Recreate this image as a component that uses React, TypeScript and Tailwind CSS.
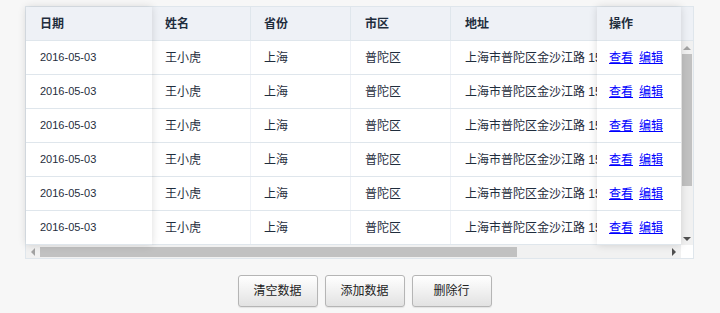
import React from 'react';

type Row = {
  date: string;
  name: string;
  province: string;
  city: string;
  address: string;
};

const rows: Row[] = Array.from({ length: 6 }, () => ({
  date: '2016-05-03',
  name: '王小虎',
  province: '上海',
  city: '普陀区',
  address: '上海市普陀区金沙江路 1518 弄',
}));

const cjk = "font-['Liberation_Sans','Noto_Sans_CJK_SC',sans-serif]";

function App() {
  return (
    <div className={`min-h-screen bg-[#f7f7f7] pt-[6px] text-[12px] text-[#1f2d3d] ${cjk}`}>
      {/* table */}
      <div className="ml-[25px] w-[669px] border border-[#dfe6ec] bg-white">
        <div className="flex h-[238px]">
          {/* fixed left column */}
          <div className="relative z-10 flex w-[126px] shrink-0 flex-col bg-white shadow-[0_0_8px_rgba(0,0,0,0.14)]">
            <div className="flex h-[34px] items-center border-b border-[#dfe6ec] bg-[#eef1f6] pl-[14px] font-bold">
              日期
            </div>
            {rows.map((r, i) => (
              <div
                key={i}
                className="flex h-[34px] items-center border-b border-[#dfe6ec] pl-[14px] text-[11px] font-['Liberation_Sans',sans-serif]"
              >
                {r.date}
              </div>
            ))}
          </div>

          {/* scrolling middle */}
          <div className="w-[445px] shrink-0 overflow-hidden">
            <div className="flex h-[34px] w-[600px] border-b border-[#dfe6ec] bg-[#eef1f6] font-bold">
              <div className="flex w-[99px] items-center border-r border-[#dfe6ec] pl-[13px]">姓名</div>
              <div className="flex w-[100px] items-center border-r border-[#dfe6ec] pl-[13px]">省份</div>
              <div className="flex w-[100px] items-center border-r border-[#dfe6ec] pl-[14px]">市区</div>
              <div className="flex w-[300px] items-center pl-[14px]">地址</div>
            </div>
            {rows.map((r, i) => (
              <div key={i} className="flex h-[34px] w-[600px] border-b border-[#dfe6ec]">
                <div className="flex w-[99px] items-center border-r border-[#eef1f6] pl-[13px]">{r.name}</div>
                <div className="flex w-[100px] items-center border-r border-[#eef1f6] pl-[13px]">{r.province}</div>
                <div className="flex w-[100px] items-center border-r border-[#eef1f6] pl-[14px]">{r.city}</div>
                <div className="flex w-[300px] items-center whitespace-nowrap pl-[14px]">{r.address}</div>
              </div>
            ))}
          </div>

          {/* fixed right column */}
          <div className="relative z-10 flex w-[84px] shrink-0 flex-col bg-white shadow-[0_0_8px_rgba(0,0,0,0.14)]">
            <div className="flex h-[34px] items-center border-b border-[#dfe6ec] bg-[#eef1f6] pl-[12px] font-bold">
              操作
            </div>
            {rows.map((_, i) => (
              <div key={i} className="flex h-[34px] items-center gap-[6px] border-b border-[#dfe6ec] pl-[12px]">
                <a className="text-[#0000ff] underline">查看</a>
                <a className="text-[#0000ff] underline">编辑</a>
              </div>
            ))}
          </div>

          {/* vertical scrollbar */}
          <div className="flex w-[12px] shrink-0 flex-col">
            <div className="h-[34px] border-b border-[#dfe6ec] bg-[#eef1f6]" />
            <div className="flex flex-1 flex-col items-center bg-[#f1f1f1]">
              <div className="flex h-[13px] w-full items-center justify-center">
                <div className="h-0 w-0 border-x-[4px] border-b-[4px] border-x-transparent border-b-[#a3a3a3]" />
              </div>
              <div className="h-[132px] w-[10px] bg-[#c1c1c1]" />
              <div className="flex-1" />
              <div className="flex h-[13px] w-full items-center justify-center">
                <div className="h-0 w-0 border-x-[4px] border-t-[4px] border-x-transparent border-t-[#505050]" />
              </div>
            </div>
          </div>
        </div>

        {/* horizontal scrollbar */}
        <div className="flex h-[13px]">
          <div className="flex w-[655px] items-center bg-[#f1f1f1]">
            <div className="flex w-[14px] justify-center">
              <div className="h-0 w-0 border-y-[4px] border-r-[4px] border-y-transparent border-r-[#a3a3a3]" />
            </div>
            <div className="h-[10px] w-[477px] bg-[#c1c1c1]" />
            <div className="flex-1" />
            <div className="flex w-[14px] justify-center">
              <div className="h-0 w-0 border-y-[4px] border-l-[4px] border-y-transparent border-l-[#505050]" />
            </div>
          </div>
          <div className="w-[12px] bg-white" />
        </div>
      </div>

      {/* actions */}
      <div className="mt-[16px] flex justify-center gap-[7px] pl-[9px]">
        {['清空数据', '添加数据', '删除行'].map((label) => (
          <button
            key={label}
            className="h-[32px] w-[80px] rounded-[3px] border border-[#b5b5b5] bg-gradient-to-b from-[#ffffff] to-[#e2e2e2] text-[12px] text-[#222] shadow-[0_1px_1px_rgba(0,0,0,0.08)]"
          >
            {label}
          </button>
        ))}
      </div>
    </div>
  );
}

export default App;
